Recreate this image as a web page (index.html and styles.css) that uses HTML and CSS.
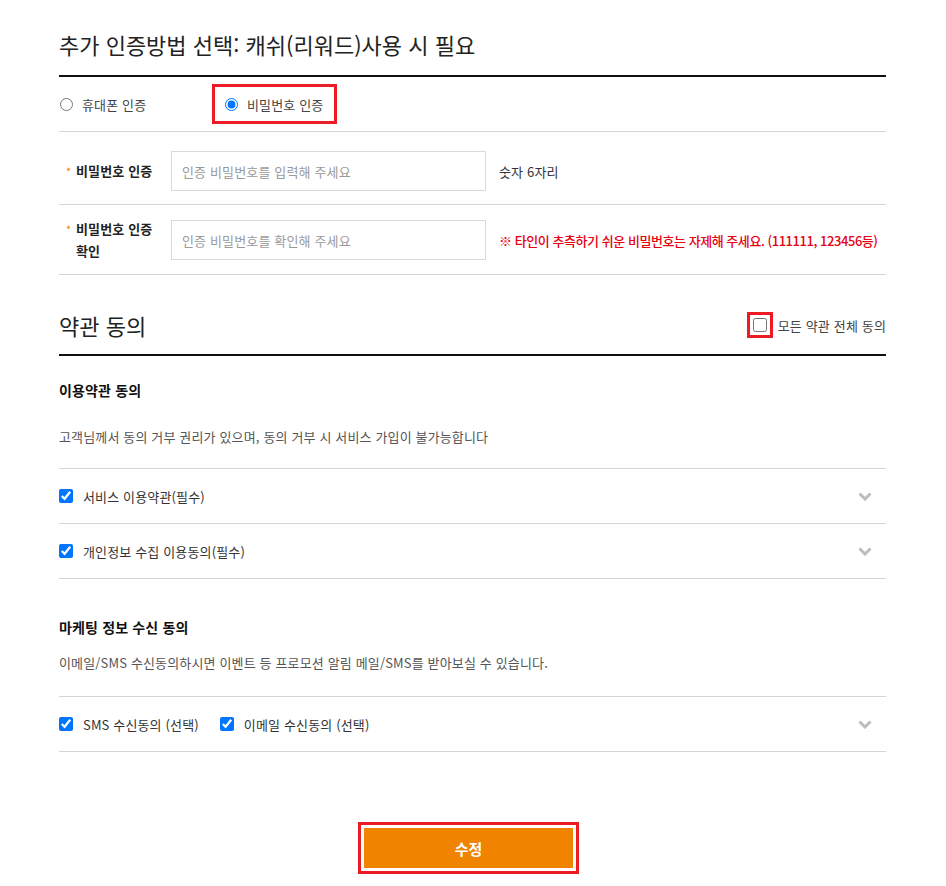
FILE: index.html
```html
<!DOCTYPE html>
<html lang="ko">

<head>
    <meta charset="UTF-8">
    <meta name="viewport" content="width=device-width, initial-scale=1.0">
    <title>추가 인증방법 선택</title>
    <link rel="stylesheet" href="styles.css">
</head>

<body>

    <div class="wrap">
        <h2 class="sec-title">추가 인증방법 선택: 캐쉬(리워드)사용 시 필요</h2>

        <div class="auth-type">
            <label class="radio"><input type="radio" name="auth"><span>휴대폰 인증</span></label>
            <label class="radio marked"><input type="radio" name="auth" checked><span>비밀번호 인증</span></label>
        </div>

        <div class="form-row">
            <div class="form-label"><span class="req">*</span><span>비밀번호 인증</span></div>
            <input type="password" class="text-input" placeholder="인증 비밀번호를 입력해 주세요">
            <p class="hint">숫자 6자리</p>
        </div>

        <div class="form-row tall">
            <div class="form-label"><span class="req">*</span><span>비밀번호 인증 확인</span></div>
            <input type="password" class="text-input" placeholder="인증 비밀번호를 확인해 주세요">
            <p class="hint warn">※ 타인이 추측하기 쉬운 비밀번호는 자제해 주세요. (111111, 123456등)</p>
        </div>

        <div class="terms-head">
            <h2 class="sec-title">약관 동의</h2>
            <label class="all-agree">
                <span class="marked-box"><input type="checkbox"></span>
                <span>모든 약관 전체 동의</span>
            </label>
        </div>

        <div class="agree-block">
            <h3 class="agree-title">이용약관 동의</h3>
            <p class="agree-desc">고객님께서 동의 거부 권리가 있으며, 동의 거부 시 서비스 가입이 불가능합니다</p>
            <ul class="agree-list">
                <li class="agree-item">
                    <label class="check"><input type="checkbox" checked><span>서비스 이용약관(필수)</span></label>
                    <svg class="chevron" width="14" height="9" viewBox="0 0 14 9"><path d="M1.5 1.5 L7 7 L12.5 1.5" /></svg>
                </li>
                <li class="agree-item">
                    <label class="check"><input type="checkbox" checked><span>개인정보 수집 이용동의(필수)</span></label>
                    <svg class="chevron" width="14" height="9" viewBox="0 0 14 9"><path d="M1.5 1.5 L7 7 L12.5 1.5" /></svg>
                </li>
            </ul>
        </div>

        <div class="agree-block">
            <h3 class="agree-title">마케팅 정보 수신 동의</h3>
            <p class="agree-desc">이메일/SMS 수신동의하시면 이벤트 등 프로모션 알림 메일/SMS를 받아보실 수 있습니다.</p>
            <ul class="agree-list">
                <li class="agree-item">
                    <label class="check"><input type="checkbox" checked><span>SMS 수신동의 (선택)</span></label>
                    <label class="check"><input type="checkbox" checked><span>이메일 수신동의 (선택)</span></label>
                    <svg class="chevron" width="14" height="9" viewBox="0 0 14 9"><path d="M1.5 1.5 L7 7 L12.5 1.5" /></svg>
                </li>
            </ul>
        </div>

        <div class="btn-area">
            <button type="button" class="btn-submit">수정</button>
        </div>
    </div>

</body>

</html>
```

FILE: styles.css
```css
body {
    margin: 0;
    background: #fff;
    color: #333;
    font-family: "Noto Sans CJK KR", "Noto Sans", sans-serif;
    font-size: 13px;
    letter-spacing: 0.15px;
}

.wrap {
    width: 827px;
    margin-left: 59px;
}

.sec-title {
    margin: 0;
    font-size: 22px;
    line-height: 32px;
    font-weight: 400;
    letter-spacing: 0;
    color: #222;
}

.wrap > .sec-title {
    padding: 28px 0 15px;
    border-bottom: 2px solid #111;
}

/* 인증방법 선택 */
.auth-type {
    display: grid;
    grid-template-columns: 153px auto;
    justify-content: start;
    align-items: center;
    height: 54px;
    border-bottom: 1px solid #d5d5d5;
}

.radio {
    display: flex;
    align-items: center;
    gap: 9px;
    color: #444;
}

.radio input {
    width: 13px;
    height: 13px;
    margin: 0 0 0 1px;
    accent-color: #0075ff;
}

.radio.marked {
    box-sizing: border-box;
    height: 40px;
    padding: 0 11px 0 9px;
    border: 3px solid #ed1c24;
}

/* 비밀번호 입력 */
.form-row {
    display: flex;
    align-items: center;
    padding: 19px 0 13px;
    border-bottom: 1px solid #d5d5d5;
}

.form-row.tall {
    padding: 13px 0 12px;
}

.form-label {
    display: flex;
    flex: none;
    box-sizing: border-box;
    width: 112px;
    padding: 0 18px 0 7px;
    font-weight: 700;
    line-height: 22px;
    color: #222;
}

.req {
    flex: none;
    width: 10px;
    font-size: 11px;
    font-weight: 400;
    color: #f08300;
}

.text-input {
    flex: none;
    box-sizing: border-box;
    width: 315px;
    height: 40px;
    padding: 0 10px;
    border: 1px solid #d9d9d9;
    font-family: inherit;
    font-size: 13px;
    letter-spacing: 0.15px;
    outline: none;
}

.text-input::placeholder {
    color: #9a9a9a;
}

.hint {
    margin: 0 0 0 13px;
    white-space: nowrap;
    color: #333;
}

.hint.warn {
    color: #e60012;
    font-weight: 500;
    letter-spacing: -0.45px;
}

/* 약관 동의 */
.terms-head {
    display: flex;
    justify-content: space-between;
    align-items: center;
    margin-top: 34px;
    padding-bottom: 13px;
    border-bottom: 2px solid #111;
}

.all-agree {
    display: flex;
    align-items: center;
    gap: 5px;
    color: #444;
}

.marked-box {
    display: flex;
    padding: 3px;
    border: 3px solid #ed1c24;
}

.marked-box input {
    width: 14px;
    height: 14px;
    margin: 0;
}

.agree-block {
    margin-top: 24px;
}

.agree-block + .agree-block {
    margin-top: 38px;
}

.agree-title {
    margin: 0;
    font-size: 14px;
    line-height: 20px;
    font-weight: 700;
    color: #111;
}

.agree-desc {
    margin: 27px 0 21px;
    line-height: 20px;
    color: #555;
}

.agree-block + .agree-block .agree-desc {
    margin: 16px 0 23px;
}

.agree-list {
    margin: 0;
    padding: 0;
    list-style: none;
    border-bottom: 1px solid #d5d5d5;
}

.agree-item {
    display: flex;
    align-items: center;
    gap: 21px;
    height: 54px;
    border-top: 1px solid #d5d5d5;
}

.check {
    display: flex;
    align-items: center;
    gap: 10px;
    color: #333;
}

.check input {
    width: 14px;
    height: 14px;
    margin: 0;
    accent-color: #0075ff;
}

.chevron {
    margin: 0 14px 0 auto;
    fill: none;
    stroke: #bdbdbd;
    stroke-width: 3;
}

/* 버튼 */
.btn-area {
    display: flex;
    justify-content: center;
    margin-top: 76px;
    padding: 0 8px 19px 0;
}

.btn-submit {
    width: 209px;
    height: 40px;
    border: 0;
    background: #f08300;
    color: #fff;
    font-family: inherit;
    font-size: 15px;
    font-weight: 700;
    outline: 3px solid #ed1c24;
    outline-offset: 3px;
}
```
